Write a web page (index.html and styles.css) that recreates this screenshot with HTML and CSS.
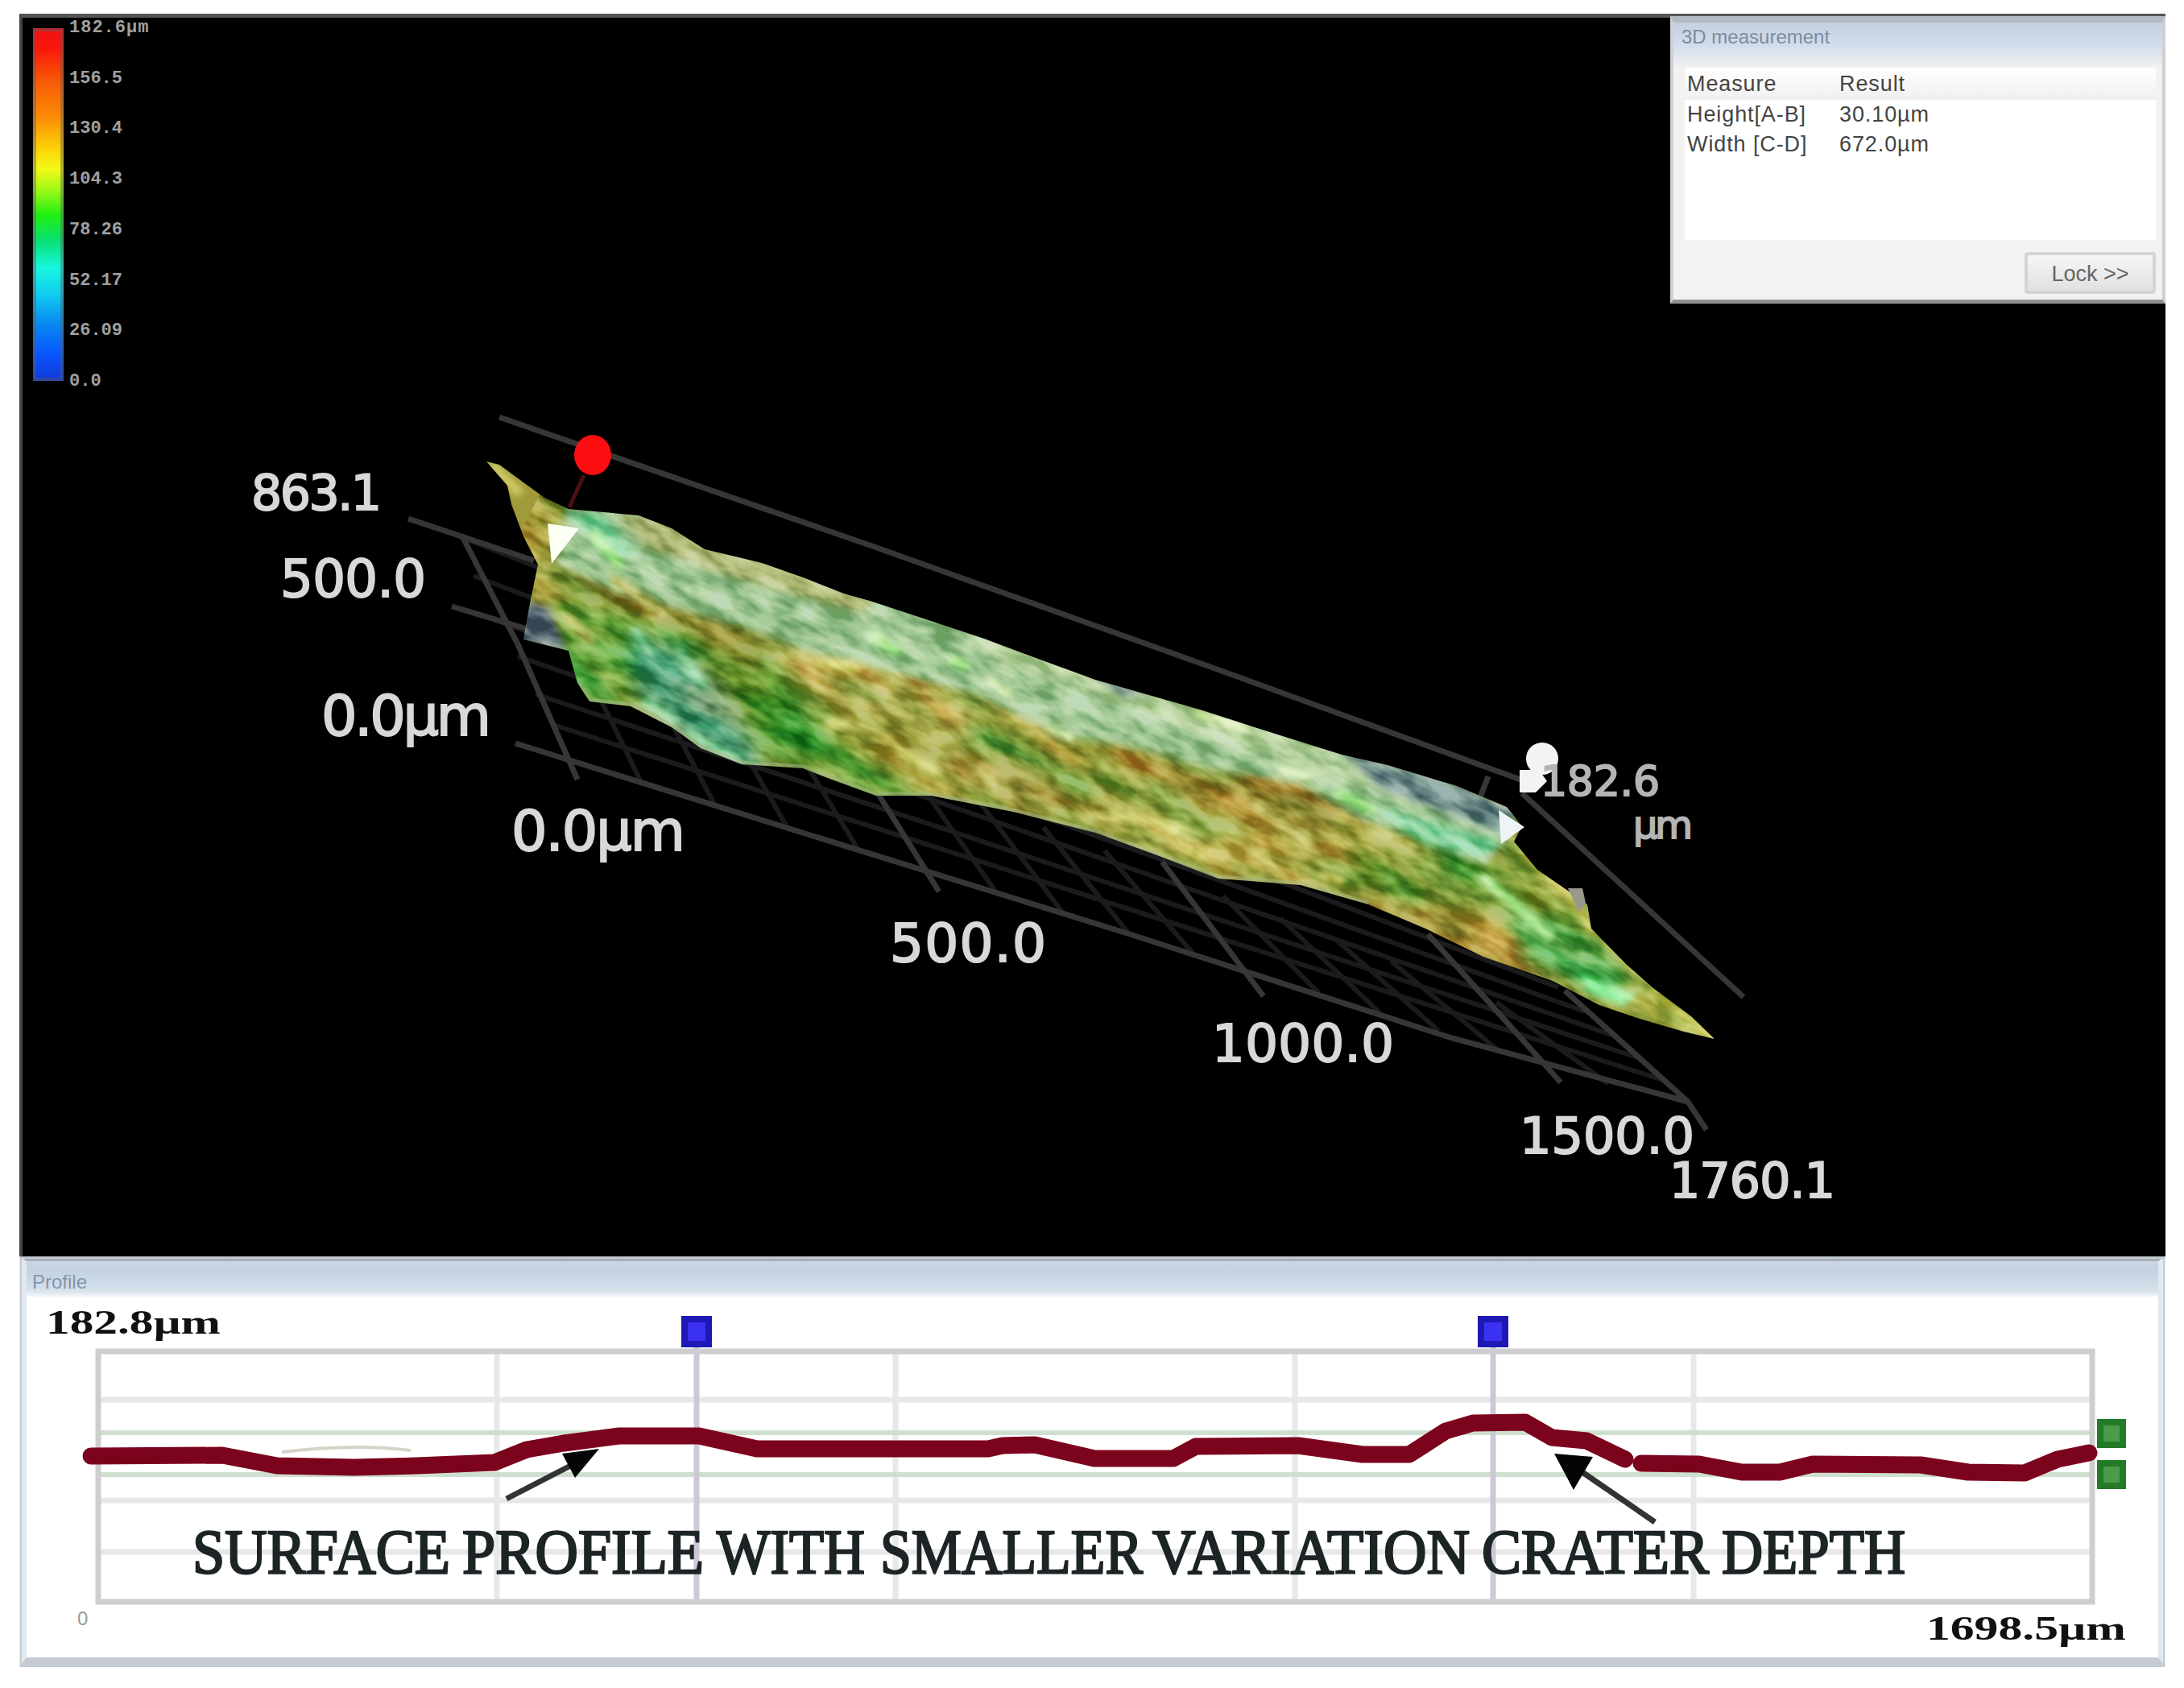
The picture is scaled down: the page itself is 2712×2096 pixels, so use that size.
FILE: index.html
```
<!DOCTYPE html>
<html lang="en">
<head>
  <meta charset="UTF-8">
  <title>3D measurement</title>
  <link rel="stylesheet" href="styles.css">
</head>
<body>
  <main class="app">
    <section class="view">
      <svg class="scene" viewBox="25 22 2661 1538">
        <defs>
          <clipPath id="surface-clip">
            <path d="M601 573 L617 577 L647 599 L673 618 L703 632 L724 634 L790 640 L831 656 L872 682 L943 699 L994 717 L1045 737 L1077 746 L1153 771 L1219 793 L1286 818 L1357 844 L1434 866 L1490 882 L1561 905 L1663 937 L1720 950 L1806 976 L1868 1002 L1887 1026 L1877 1045 L1906 1080 L1944 1106 L1968 1123 L1973 1153 L2016 1197 L2050 1227 L2097 1262 L2126 1290 L2088 1281 L2030 1264 L1983 1248 L1925 1218 L1839 1188 L1767 1153 L1696 1123 L1612 1099 L1510 1091 L1434 1062 L1357 1034 L1255 1008 L1153 988 L1085 988 L1030 968 L994 954 L918 949 L867 929 L831 903 L780 877 L729 871 L714 848 L703 808 L647 794 L655 749 L665 701 L647 666 L632 626 L627 603 Z"/>
          </clipPath>
          <filter id="soft" x="-20%" y="-20%" width="140%" height="140%"><feGaussianBlur stdDeviation="10"/></filter>
          <filter id="edge" x="-20%" y="-20%" width="140%" height="140%"><feGaussianBlur stdDeviation="4"/></filter>
          <filter id="grain" x="0" y="0" width="100%" height="100%" color-interpolation-filters="sRGB">
            <feTurbulence type="fractalNoise" baseFrequency=".022 .055" numOctaves="3" seed="8"/>
            <feColorMatrix values="2.4 0 0 0 -.66  2.4 0 0 0 -.66  2 0 0 0 -.5  0 0 0 0 1"/>
          </filter>
          <filter id="tint" x="0" y="0" width="100%" height="100%" color-interpolation-filters="sRGB">
            <feTurbulence type="fractalNoise" baseFrequency=".009 .026" numOctaves="2" seed="21"/>
            <feColorMatrix values="2.4 0 0 0 -.7  0 0 0 0 .56  0 0 0 0 .18  0 0 0 0 .22"/>
          </filter>
        </defs>

        <!-- grid -->
        <g class="grid-minor" id="grid-minor"></g>
        <g class="grid">
          <path d="M504 644 L660 696 M558 753 L655 782 M571 666 L640 800 L714 968"/>
          <path d="M637 923 L1000 1036 L1400 1160 L1800 1289 L2093 1368"/>
          <path d="M1087 985 L1163 1107 M1440 1070 L1566 1237 M1770 1160 L1935 1344 M1940 1230 L2093 1368 L2116 1403"/>
          <path d="M617 518 L1080 678 L1500 828 L1885 968 M1887 985 L2162 1238"/>
          <path d="M1845 964 L1835 990"/>
        </g>

        <!-- measured surface -->
        <g clip-path="url(#surface-clip)">
          <rect x="590" y="560" width="1560" height="750" fill="#a3a344"/>
          <g filter="url(#soft)">
            <path fill="#a09a3a" d="M590 560 L680 590 L700 660 L740 720 L640 760 Z"/>
            <path fill="#55a53c" d="M680 740 L800 770 L960 830 L1010 900 L1110 960 L1140 1000 L900 970 L690 880 Z"/>
            <path fill="#4f9f88" d="M780 790 L850 810 L900 870 L950 960 L860 940 L790 860 Z"/>
            <path fill="#2f8a24" d="M880 830 L960 830 L980 890 L1050 930 L1090 975 L930 910 Z"/>
            <path fill="#8b7f2a" d="M720 715 L860 750 L960 800 L930 830 L820 770 L720 745 Z"/>
            <path fill="#c4b058" d="M960 800 L1070 820 L1210 880 L1190 920 L1070 880 L1000 870 Z"/>
            <path fill="#4d9a3e" d="M1160 890 L1240 915 L1370 980 L1340 985 L1240 935 Z"/>
            <path fill="#b09a48" d="M1100 920 L1260 950 L1360 1010 L1250 990 Z"/>
            <path fill="#c6ba5c" d="M1330 1000 L1480 1020 L1620 1060 L1600 1090 L1450 1060 Z"/>
            <path fill="#9b6822" d="M1520 960 L1600 965 L1660 1010 L1630 1030 L1580 990 Z"/>
            <path fill="#9c8a34" d="M1390 930 L1530 970 L1600 1010 L1500 1010 L1400 960 Z"/>
            <path fill="#3b942c" d="M1665 1045 L1730 1080 L1780 1120 L1740 1120 L1680 1085 Z"/>
            <path fill="#af8434" d="M1680 1110 L1740 1130 L1900 1180 L1910 1200 L1800 1175 L1700 1130 Z"/>
            <path fill="#3b942c" d="M1780 1040 L1880 1090 L1960 1150 L2030 1220 L1970 1200 L1880 1130 L1800 1090 Z"/>
            <path fill="#3fb45b" d="M1860 1120 L1960 1165 L2020 1220 L1980 1240 L1890 1190 Z"/>
            <path fill="#b0aa42" d="M1890 1060 L1960 1110 L1970 1150 L1900 1110 Z"/>
            <path fill="#b4b648" d="M2020 1235 L2060 1230 L2140 1295 L2050 1270 Z"/>
          </g>
          <rect x="400" y="-500" width="1900" height="700" transform="translate(200 650) rotate(27)" filter="url(#tint)"/>
          <g filter="url(#edge)">
            <path fill="#9cc493" d="M700 628 L790 630 L880 680 L1080 740 L1357 836 L1663 930 L1800 975 L1880 1010 L1868 1045 L1840 1075 L1770 1050 L1689 1020 L1612 973 L1510 957 L1423 933 L1316 913 L1204 862 L1102 834 L994 808 L933 784 L841 757 L765 737 L688 701 Z"/>
            <path fill="#adb878" d="M760 635 L831 650 L943 695 L1080 745 L1070 762 L900 715 L800 680 Z"/>
            <path fill="#b8d3a2" d="M1200 785 L1434 862 L1640 930 L1790 1010 L1600 950 L1400 880 L1230 820 Z"/>
            <path fill="#7ed09c" d="M700 640 L740 636 L790 690 L760 690 Z M1700 1000 L1860 1045 L1840 1065 L1760 1045 Z"/>
            <path fill="#6d8c8c" d="M1350 836 L1430 862 L1390 864 Z M1660 930 L1800 970 L1880 1005 L1862 1035 L1780 1005 L1710 980 Z"/>
            <path fill="#667884" d="M650 745 L680 755 L700 808 L640 800 Z"/>
            <path fill="#8ff0a0" d="M1955 1205 L1990 1220 L2030 1235 L2010 1250 L1970 1232 Z"/>
          </g>
          <g class="highlights" filter="url(#edge)">
            <path stroke="#b5ef9b" d="M735 665 L765 700 M1080 790 L1110 808 M1180 820 L1195 826 M1660 985 L1700 1005 M1840 1090 L1920 1160"/>
            <path stroke="#8fd8a4" d="M785 785 L805 808 M840 810 L870 850 M800 870 L835 895 M850 910 L910 942"/>
            <path stroke="#d6d478" d="M1015 825 L1060 830 M1030 900 L1045 898 M1110 930 L1160 960 M1380 1010 L1460 1030 M1470 1055 L1490 1062 M1640 1085 L1660 1095"/>
            <path stroke="#e0f0c0" d="M1225 845 L1250 860 M1485 886 L1540 905 M1300 905 L1325 915 M1590 955 L1620 965"/>
            <path stroke="#bcba62" d="M760 720 L820 760 M700 765 L730 795 M1190 935 L1230 975 M1560 1000 L1620 1045 M1700 1030 L1750 1050"/>
            <path stroke="#d0cd68" d="M1890 1060 L1945 1108 L1975 1155 M2050 1232 L2125 1290 M610 580 L640 610"/>
          </g>
          <rect class="grain" x="400" y="-500" width="1900" height="700" transform="translate(200 650) rotate(27)" filter="url(#grain)"/>
          <path class="rim" d="M714 850 L729 871 L780 877 L831 903 L867 929 L918 949 L994 954 L1085 988 L1153 988 L1255 1008 L1357 1034 L1434 1062 L1510 1091 L1612 1099 L1696 1123"/>
        </g>

        <!-- cursors -->
        <path d="M1944 1103 h18 l4 18 l-8 12 z" fill="#99988c"/>
        <path d="M722 590 L704 630" stroke="#4b1010" stroke-width="5"/>
        <ellipse cx="733" cy="565" rx="23" ry="25" fill="#fb0d10"/>
        <path d="M677 650 L716 656 L682 700 Z" fill="#fbfff4"/>
        <path d="M1858 1006 L1890 1027 L1861 1048 Z" fill="#eef3f7"/>
        <ellipse cx="1912" cy="942" rx="20" ry="20" fill="#f3f3f3"/>
        <path d="M1884 956 h24 l10 14 l-14 14 h-20 z" fill="#f3f3f3"/>

        <g class="axis-labels">
          <text x="309" y="633" font-size="60" textLength="162">863.1</text>
          <text x="345" y="741" font-size="64" textLength="181">500.0</text>
          <text x="396" y="913" font-size="70" textLength="211">0.0µm</text>
          <text x="632" y="1056" font-size="70" textLength="216">0.0µm</text>
          <text x="1102" y="1194" font-size="66" textLength="194">500.0</text>
          <text x="1502" y="1318" font-size="64" textLength="226">1000.0</text>
          <text x="1884" y="1432" font-size="62" textLength="217">1500.0</text>
          <text x="2070" y="1487" font-size="60" textLength="206">1760.1</text>
          <text class="dim" x="1910" y="988" font-size="52" textLength="148">182.6</text>
          <text class="dim" x="2025" y="1041" font-size="48" textLength="74">µm</text>
        </g>
      </svg>

      <div class="legend">
        <div class="legend-bar"></div>
        <ul class="legend-values">
          <li>182.6µm</li>
          <li>156.5</li>
          <li>130.4</li>
          <li>104.3</li>
          <li>78.26</li>
          <li>52.17</li>
          <li>26.09</li>
          <li>0.0</li>
        </ul>
      </div>

      <div class="measure">
        <h1 class="measure-title">3D measurement</h1>
        <table class="measure-table">
          <tr><th>Measure</th><th>Result</th></tr>
          <tr><td>Height[A-B]</td><td>30.10µm</td></tr>
          <tr><td>Width [C-D]</td><td>672.0µm</td></tr>
        </table>
        <div class="measure-footer">
          <button class="measure-button">Lock &gt;&gt;</button>
        </div>
      </div>
    </section>

    <section class="profile">
      <h2 class="profile-title">Profile</h2>
      <svg class="chart" viewBox="33 1610 2647 448">
        <g class="chart-grid">
          <path d="M121 1738 H2600 M121 1863 H2600 M121 1927 H2600"/>
          <path d="M617 1678 V1989 M1112 1678 V1989 M1608 1678 V1989 M2103 1678 V1989"/>
        </g>
        <path d="M121 1779 H2600 M121 1831 H2600" stroke="#cfdfcf" stroke-width="6"/>
        <path d="M350 1803 Q440 1792 510 1801" stroke="#d8d3c8" stroke-width="4" fill="none"/>
        <path d="M865 1670 V1989 M1854 1670 V1989" stroke="#cdc8d8" stroke-width="7"/>
        <rect class="chart-frame" x="122" y="1678" width="2476" height="311"/>

        <g class="handle-blue">
          <rect x="850" y="1638" width="30" height="31"/>
          <rect x="1839" y="1638" width="30" height="31"/>
        </g>
        <g class="handle-green">
          <rect x="2608" y="1766" width="28" height="28"/>
          <rect x="2608" y="1817" width="28" height="28"/>
        </g>

        <path class="curve" d="M113 1808 L276 1807 L344 1820 L440 1822 L517 1820 L614 1816 L654 1800 L700 1792 L769 1783 L868 1783 L940 1799 L1227 1799 L1245 1795 L1285 1794 L1359 1811 L1457 1811 L1485 1796 L1612 1795 L1692 1806 L1750 1806 L1795 1777 L1829 1767 L1894 1766 L1927 1785 L1970 1789 L2018 1812"/>
        <path class="curve" d="M2038 1817 L2110 1818 L2163 1828 L2210 1828 L2251 1818 L2385 1819 L2444 1828 L2514 1829 L2555 1812 L2594 1804"/>

        <g class="arrows">
          <path d="M629 1861 L720 1814 M2055 1890 L1962 1826"/>
          <path class="head" d="M698 1805 L744 1799 L714 1835 Z M1930 1805 L1978 1809 L1954 1850 Z"/>
        </g>

        <text class="caption" y="1953">
          <tspan x="239" textLength="320" lengthAdjust="spacingAndGlyphs">SURFACE</tspan>
          <tspan x="574" textLength="300" lengthAdjust="spacingAndGlyphs">PROFILE</tspan>
          <tspan x="890" textLength="184" lengthAdjust="spacingAndGlyphs">WITH</tspan>
          <tspan x="1093" textLength="326" lengthAdjust="spacingAndGlyphs">SMALLER</tspan>
          <tspan x="1431" textLength="394" lengthAdjust="spacingAndGlyphs">VARIATION</tspan>
          <tspan x="1840" textLength="282" lengthAdjust="spacingAndGlyphs">CRATER</tspan>
          <tspan x="2138" textLength="228" lengthAdjust="spacingAndGlyphs">DEPTH</tspan>
        </text>
        <text class="range" x="57" y="1656" textLength="217" lengthAdjust="spacingAndGlyphs">182.8µm</text>
        <text class="range" x="2392" y="2036" textLength="248" lengthAdjust="spacingAndGlyphs">1698.5µm</text>
        <text class="origin" x="96" y="2018">0</text>
      </svg>
    </section>
  </main>

  <script>
    // floor grid: lines along the length, then the cross lines in perspective
    const minor = document.getElementById('grid-minor');
    let d = '';
    const left = [[560, 663], [585, 715], [612, 770], [640, 815], [662, 862], [684, 900]];
    const right = [[1900, 1195], [1932, 1226], [1965, 1256], [1998, 1285], [2030, 1313], [2062, 1341]];
    for (let i = 0; i < left.length; i++) {
      d += `M${left[i]} L${right[i]} `;
    }
    for (let i = 1; i < 17; i++) {
      if (i % 5 === 0) continue;
      const x = 700 + 94 * i - 0.82 * i * i;
      const y = 942 + (x - 700) * 0.312;
      d += `M${x} ${y} l${-(75 + i * 4)} ${-(165 - i * 4)} `;
    }
    minor.innerHTML = `<path d="${d}"/>`;
  </script>
</body>
</html>
```
FILE: styles.css
```
* {
  box-sizing: border-box;
}
body {
  margin: 0;
  background: #fff;
  font-family: "Liberation Sans", Arial, sans-serif;
}
.app {
  width: 2665px;
  margin: 17px 0 0 24px;
}
.view {
  position: relative;
  height: 1543px;
  background: #000;
  border-top: 5px solid #555;
  border-left: 4px solid #444;
}
.scene {
  display: block;
  width: 2661px;
  height: 1538px;
}
.grid path {
  fill: none;
  stroke: #363636;
  stroke-width: 7;
}
.grid-minor path {
  fill: none;
  stroke: #1b1b1e;
  stroke-width: 6;
}
.grain {
  mix-blend-mode: soft-light;
  opacity: .8;
}
.highlights path {
  fill: none;
  stroke-width: 12;
  stroke-linecap: round;
}
.rim {
  fill: none;
  stroke: #a5b985;
  stroke-width: 9;
  opacity: .55;
}
.axis-labels {
  font-family: "DejaVu Sans", sans-serif;
  fill: #d8d8d8;
  stroke: #d8d8d8;
  stroke-width: 2;
}
.axis-labels .dim {
  fill: #b4b4b4;
  stroke: #b4b4b4;
}

/* height scale */
.legend {
  position: absolute;
  top: 1px;
  left: 13px;
  display: flex;
  gap: 7px;
}
.legend-bar {
  width: 38px;
  height: 438px;
  margin-top: 12px;
  border: 4px solid rgba(90, 90, 90, .45);
  background: linear-gradient(#f01018 0%, #fb1808 6%, #f85a08 15%, #fb8a04 25%, #fcd808 35%, #f4fa18 40%, #9cf818 46%, #20f010 53%, #08e070 60%, #18f8e0 68%, #10c8f0 76%, #0888f0 84%, #0858ff 92%, #1038d8 100%);
  background-origin: border-box;
}
.legend-values {
  display: flex;
  flex-direction: column;
  justify-content: space-between;
  height: 463px;
  margin: 0;
  padding: 0;
  list-style: none;
  font: bold 22px/24px "Liberation Mono", monospace;
  color: #a0a0a0;
}
.legend-values li:first-child {
  letter-spacing: 1px;
}

/* measurement window */
.measure {
  position: absolute;
  top: -2px;
  right: 0;
  display: flex;
  flex-direction: column;
  width: 615px;
  height: 357px;
  padding: 0 8px 6px 14px;
  background: #f2f2f2;
  border: 5px solid #d0d0d2;
  border-width: 8px 4px 5px;
  border-top-color: #b4bac4;
  border-bottom-color: #909092;
}
.measure-title {
  height: 56px;
  margin: 0 -8px 0 -14px;
  padding: 4px 10px 0;
  background: linear-gradient(#c3d1df 0%, #d0ddec 50%, #e3e7ee 75%, #f0f0f4 100%);
  font-size: 24px;
  font-weight: normal;
  line-height: 28px;
  color: #7d8b9b;
}
.measure-table {
  display: block;
  height: 214px;
  background: #fff;
  border-spacing: 0;
  font-size: 27px;
  line-height: 37px;
  letter-spacing: .9px;
  color: #444;
}
.measure-table tr {
  display: grid;
  grid-template-columns: 189px 380px;
}
.measure-table tr:first-child {
  background: linear-gradient(#fff, #f0f0f0);
  line-height: 40px;
}
.measure-table tbody {
  display: block;
}
.measure-table th,
.measure-table td {
  padding: 0 3px;
  font-weight: normal;
  text-align: left;
  white-space: nowrap;
}
.measure-footer {
  display: flex;
  justify-content: flex-end;
  padding-top: 15px;
}
.measure-button {
  width: 163px;
  height: 52px;
  padding-top: 4px;
  border: 4px solid #d4d4d4;
  border-radius: 4px;
  background: linear-gradient(#f6f6f6, #e0e0e0);
  font: 27px "Liberation Sans", Arial, sans-serif;
  color: #666;
}

/* profile window */
.profile {
  height: 510px;
  border: 9px solid #e2e8f0;
  border-width: 6px 9px 12px;
  border-top-color: #a9adb5;
  border-bottom-color: #c4cad2;
  background: #fff;
  outline: 2px solid #c6ccd4;
  outline-offset: -3px;
}
.profile-title {
  height: 44px;
  margin: 0;
  padding: 12px 7px 0;
  background: linear-gradient(#ccd6e2, #c4d1df 25%, #cddbe8 60%, #d8e4ec 85%, #f2f7fc);
  font-size: 24px;
  font-weight: normal;
  line-height: 28px;
  color: #8296aa;
}
.chart {
  display: block;
  width: 2647px;
  height: 448px;
}
.chart-grid path {
  stroke: #e8e8e8;
  stroke-width: 7;
}
.chart-frame {
  fill: none;
  stroke: #cecece;
  stroke-width: 7;
}
.handle-blue rect {
  fill: #3a32f0;
  stroke: #2018b4;
  stroke-width: 8;
}
.handle-green rect {
  fill: #4a9c4c;
  stroke: #237a28;
  stroke-width: 8;
}
.curve {
  fill: none;
  stroke: #7c031c;
  stroke-width: 21;
  stroke-linejoin: round;
  stroke-linecap: round;
}
.arrows path {
  stroke: #333;
  stroke-width: 7;
}
.arrows .head {
  fill: #050505;
  stroke: none;
}
.caption {
  font: 79px "Liberation Serif", "Times New Roman", serif;
  fill: #1c2426;
  stroke: #1c2426;
  stroke-width: 2.5;
}
.range {
  font: bold 43px "Liberation Serif", "Times New Roman", serif;
  fill: #111;
}
.origin {
  font-size: 24px;
  fill: #999;
}
```
